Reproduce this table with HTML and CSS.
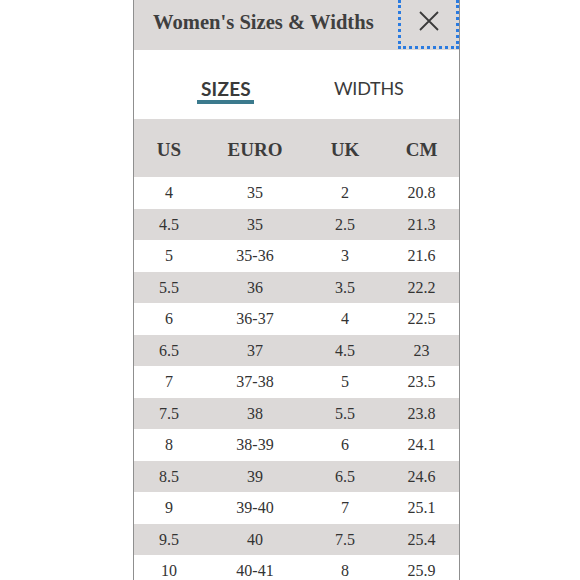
FILE: index.html
```html
<!DOCTYPE html>
<html>
<head>
<meta charset="utf-8">
<link rel="stylesheet" href="styles.css">
</head>
<body>
<div class="panel">
  <div class="header">
    <div class="title">Women's Sizes &amp; Widths</div>
    <button class="close" aria-label="Close">
      <svg width="22" height="22" viewBox="0 0 22 22"><path d="M2 2 L20 20 M20 2 L2 20" stroke="#3a3a3a" stroke-width="1.8" fill="none"/></svg>
    </button>
  </div>
  <div class="tabs">
    <div class="tab active">SIZES</div>
    <div class="tab">WIDTHS</div>
  </div>
  <div class="table">
    <div class="row head"><div>US</div><div>EURO</div><div>UK</div><div>CM</div></div>
    <div class="row"><div>4</div><div>35</div><div>2</div><div>20.8</div></div>
    <div class="row alt"><div>4.5</div><div>35</div><div>2.5</div><div>21.3</div></div>
    <div class="row"><div>5</div><div>35-36</div><div>3</div><div>21.6</div></div>
    <div class="row alt"><div>5.5</div><div>36</div><div>3.5</div><div>22.2</div></div>
    <div class="row"><div>6</div><div>36-37</div><div>4</div><div>22.5</div></div>
    <div class="row alt"><div>6.5</div><div>37</div><div>4.5</div><div>23</div></div>
    <div class="row"><div>7</div><div>37-38</div><div>5</div><div>23.5</div></div>
    <div class="row alt"><div>7.5</div><div>38</div><div>5.5</div><div>23.8</div></div>
    <div class="row"><div>8</div><div>38-39</div><div>6</div><div>24.1</div></div>
    <div class="row alt"><div>8.5</div><div>39</div><div>6.5</div><div>24.6</div></div>
    <div class="row"><div>9</div><div>39-40</div><div>7</div><div>25.1</div></div>
    <div class="row alt"><div>9.5</div><div>40</div><div>7.5</div><div>25.4</div></div>
    <div class="row"><div>10</div><div>40-41</div><div>8</div><div>25.9</div></div>
  </div>
</div>
</body>
</html>
```
FILE: styles.css
```css
html, body {
  margin: 0;
  padding: 0;
  background: #fff;
  overflow: hidden;
}
.panel {
  margin-left: 133px;
  width: 325px;
  border-left: 1.5px solid #8f8f8f;
  border-right: 1.5px solid #8f8f8f;
  height: 600px;
  background: #fff;
}
.header {
  height: 50px;
  background: #dcd9d8;
  display: flex;
  align-items: stretch;
  justify-content: space-between;
}
.title {
  font-family: "Liberation Serif", serif;
  font-weight: bold;
  font-size: 20.6px;
  color: #3f3f3f;
  padding-left: 19px;
  line-height: 44px;
}
.close {
  width: 61px;
  height: 49px;
  box-sizing: border-box;
  border: 3px dotted #2a7be0;
  border-top: none;
  background: transparent;
  padding: 0;
  margin: 0;
  display: flex;
  align-items: center;
  justify-content: center;
  padding-bottom: 4px;
}
.close svg { display: block; }
.tabs {
  height: 69px;
  display: flex;
  font-family: "Lato", sans-serif;
  font-size: 19px;
  color: #3a3a3a;
}
.tab {
  position: relative;
  padding-top: 27px;
}
.tab.active {
  margin-left: 67px;
  font-weight: bold;
  letter-spacing: 0.2px;
}
.tab.active::after {
  content: "";
  position: absolute;
  left: -4px;
  right: -3px;
  top: 50px;
  height: 4px;
  background: #3b7a8d;
}
.tab + .tab {
  margin-left: 83px;
  font-size: 18px;
  letter-spacing: -0.2px;
}
.table {
  font-family: "Liberation Serif", serif;
  color: #333;
}
.row {
  display: grid;
  grid-template-columns: 70px 102px 78px 75px;
  height: 31.5px;
  align-items: center;
  text-align: center;
  font-size: 16px;
  padding-top: 1px;
  box-sizing: border-box;
}
.row.alt {
  background: #dcd9d8;
}
.row.head {
  height: 58px;
  padding-top: 4px;
  background: #dcd9d8;
  font-weight: bold;
  font-size: 19px;
  color: #3c3c3c;
}
```
